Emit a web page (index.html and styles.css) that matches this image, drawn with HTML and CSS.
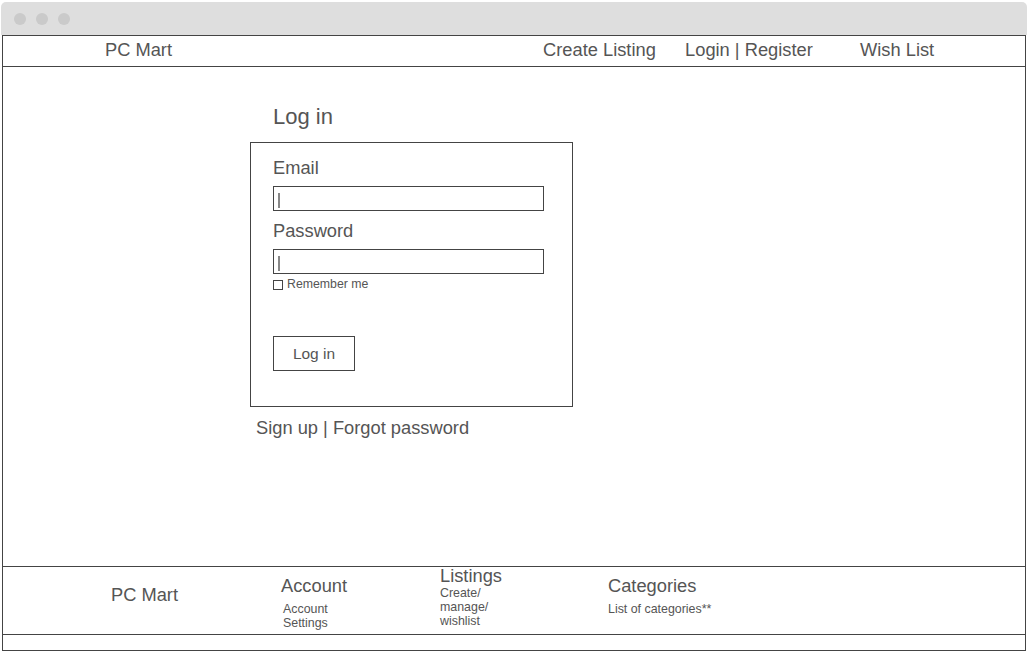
FILE: index.html
```html
<!DOCTYPE html>
<html lang="en">
<head>
<meta charset="utf-8">
<title>PC Mart - Log in</title>
<link rel="stylesheet" href="styles.css">
</head>
<body>
<div class="window">
  <div class="titlebar">
    <span class="dot"></span><span class="dot"></span><span class="dot"></span>
  </div>
  <div class="frame">
    <header class="topnav">
      <span class="brand">PC Mart</span>
      <nav class="nav">
        <a class="nav-item nav-create">Create Listing</a>
        <a class="nav-item nav-login">Login | Register</a>
        <a class="nav-item">Wish List</a>
      </nav>
    </header>
    <main class="main">
      <section class="login">
        <h1 class="login-title">Log in</h1>
        <form class="card">
          <label class="field-label">Email</label>
          <div class="input"><span class="caret"></span></div>
          <label class="field-label field-label-next">Password</label>
          <div class="input"><span class="caret"></span></div>
          <div class="remember"><span class="checkbox"></span><span>Remember me</span></div>
          <div class="btn">Log in</div>
        </form>
        <p class="extra">Sign up | Forgot password</p>
      </section>
    </main>
    <footer class="footer">
      <div class="fcol fcol-brand">PC Mart</div>
      <div class="fcol fcol-account">
        <div class="ftitle ftitle-gap">Account</div>
        <div class="fsmall">Account<br>Settings</div>
      </div>
      <div class="fcol fcol-listings">
        <div class="ftitle ftitle-tight">Listings</div>
        <div class="fsmall">Create/<br>manage/<br>wishlist</div>
      </div>
      <div class="fcol fcol-categories">
        <div class="ftitle ftitle-gap">Categories</div>
        <div class="fsmall">List of categories**</div>
      </div>
    </footer>
    <div class="strip"></div>
  </div>
</div>
</body>
</html>
```
FILE: styles.css
```css
* { box-sizing: border-box; }

body {
  margin: 0;
  background: #ffffff;
  font-family: "Liberation Sans", Arial, sans-serif;
  color: #555555;
}

.window {
  margin: 2px 0 0 1px;
  width: 1026px;
}

.titlebar {
  height: 33px;
  background: #dedede;
  border-radius: 5px 5px 0 0;
  display: flex;
  align-items: center;
  gap: 10px;
  padding-left: 13px;
}

.dot {
  width: 12px;
  height: 12px;
  border-radius: 50%;
  background: #cacaca;
}

.frame {
  margin: 0 1px;
  width: 1024px;
  height: 616px;
  border: 1px solid #444444;
  background: #ffffff;
  display: flex;
  flex-direction: column;
}

.topnav {
  height: 31px;
  flex: none;
  border-bottom: 1px solid #444444;
  display: flex;
  align-items: center;
  padding-left: 102px;
  padding-bottom: 2px;
  font-size: 18.3px;
  line-height: 20px;
}

.nav {
  display: flex;
  margin-left: 371px;
}

.nav-item { color: #555555; }
.nav-create { width: 142px; }
.nav-login { width: 175px; }

.main {
  flex: 1;
  padding-top: 37px;
}

.login {
  margin-left: 247px;
  width: 323px;
}

.login-title {
  margin: 0 0 12px 23px;
  font-size: 22px;
  line-height: 26px;
  font-weight: normal;
}

.card {
  margin: 0;
  border: 1px solid #444444;
  padding: 15px 0 35px 22px;
  display: flex;
  flex-direction: column;
  align-items: flex-start;
}

.field-label {
  font-size: 18.3px;
  line-height: 20px;
}

.field-label-next { margin-top: 10px; }

.input {
  margin-top: 8px;
  width: 271px;
  height: 25px;
  border: 1px solid #444444;
  padding: 6px 0 0 4px;
}

.caret {
  display: block;
  width: 2px;
  height: 15px;
  background: #888888;
}

.remember {
  margin-top: 3px;
  display: flex;
  align-items: flex-end;
  gap: 4px;
  font-size: 12.3px;
  line-height: 14px;
}

.checkbox {
  width: 10px;
  height: 10px;
  border: 1px solid #444444;
  margin-bottom: 1px;
}

.btn {
  margin-top: 45px;
  width: 82px;
  height: 35px;
  border: 1px solid #444444;
  display: flex;
  align-items: center;
  justify-content: center;
  font-size: 15.5px;
}

.extra {
  margin: 11px 0 0 6px;
  font-size: 18.3px;
  line-height: 20px;
}

.footer {
  flex: none;
  height: 69px;
  border-top: 1px solid #444444;
  border-bottom: 1px solid #444444;
  display: flex;
  padding-left: 108px;
}

.fcol { line-height: 20px; font-size: 18.3px; }
.fcol-brand { width: 170px; padding-top: 18px; }
.fcol-account { width: 159px; padding-top: 9px; }
.fcol-listings { width: 168px; margin-top: -1px; }
.fcol-categories { padding-top: 9px; }

.ftitle { font-size: 18.3px; line-height: 20px; }
.ftitle-gap { margin-bottom: 6px; }
.ftitle-tight { line-height: 20px; }

.fcol-account .fsmall { padding-left: 2px; }

.fsmall {
  font-size: 12.4px;
  line-height: 14px;
}

.strip {
  height: 15px;
  flex: none;
}
```
